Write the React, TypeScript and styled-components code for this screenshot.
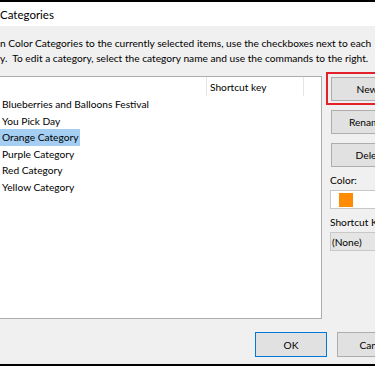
import styled, { createGlobalStyle } from 'styled-components';

const categories = [
    'Blueberries and Balloons Festival',
    'You Pick Day',
    'Orange Category',
    'Purple Category',
    'Red Category',
    'Yellow Category',
];

const GlobalStyle = createGlobalStyle`
    html, body {
        margin: 0;
        padding: 0;
        background: #f0f0f0;
    }
    #root {
        width: 375px;
        height: 366px;
        overflow: hidden;
    }
`;

const Frame = styled.div`
    width: 375px;
    height: 366px;
    box-sizing: border-box;
    border-top: 2px solid #000;
    border-bottom: 2px solid #000;
    display: flex;
    flex-direction: column;
    font-family: Lato, 'Noto Sans', sans-serif;
    font-size: 10.2px;
    color: #000;
    overflow: hidden;
`;

const TitleBar = styled.div`
    height: 24px;
    background: #fff;
    display: flex;
    align-items: center;
    font-size: 11.5px;
    white-space: nowrap;
`;

const Body = styled.div`
    flex: 1;
    background: #f0f0f0;
    display: flex;
    flex-direction: column;
`;

const Description = styled.div`
    padding-top: 10px;
    line-height: 15px;
    white-space: nowrap;
    height: 40px;
    box-sizing: border-box;
`;

const Main = styled.div`
    display: flex;
    gap: 8px;
    margin-top: 10px;
`;

const ListBox = styled.div`
    flex-shrink: 0;
    width: 322px;
    height: 243px;
    box-sizing: border-box;
    background: #fff;
    border: 1px solid #adadad;
    border-left: none;
    display: flex;
    flex-direction: column;
`;

const Header = styled.div`
    height: 19px;
    display: grid;
    grid-template-columns: 207px 97px 1fr;
`;

const HeaderCell = styled.div<{ $sep?: boolean }>`
    border-right: ${(p) => (p.$sep ? '1px solid #e5e5e5' : 'none')};
    padding-left: 3px;
    display: flex;
    align-items: center;
`;

const Rows = styled.div`
    display: flex;
    flex-direction: column;
`;

const Row = styled.div`
    height: 16.5px;
    display: flex;
    align-items: center;
`;

const Label = styled.span<{ $selected?: boolean }>`
    padding: 1px 2px;
    line-height: 14.5px;
    background: ${(p) => (p.$selected ? '#a4cff3' : 'transparent')};
`;

const Side = styled.div`
    flex-shrink: 0;
    width: 45px;
    display: flex;
    flex-direction: column;
    padding-top: 1px;
`;

const Button = styled.div<{ $focused?: boolean; $width?: number }>`
    position: relative;
    width: ${(p) => p.$width ?? 79}px;
    height: 24px;
    box-sizing: border-box;
    background: #e1e1e1;
    border: 1px solid ${(p) => (p.$focused ? '#0078d7' : '#adadad')};
    display: flex;
    align-items: center;
    justify-content: center;
    flex-shrink: 0;
    white-space: nowrap;
`;

const SideButton = styled(Button)`
    margin-left: 1px;
    margin-bottom: 9px;

    &:nth-of-type(3) {
        margin-bottom: 6px;
    }
`;

const Highlight = styled.div`
    position: absolute;
    left: -6px;
    top: -6px;
    width: 100px;
    height: 33px;
    box-sizing: border-box;
    border: 2px solid #e3212b;
`;

const FieldLabel = styled.div`
    height: 15px;
    line-height: 15px;
    margin-bottom: 2px;
    white-space: nowrap;
`;

const ColorBox = styled.div`
    width: 70px;
    height: 19px;
    flex-shrink: 0;
    box-sizing: border-box;
    background: #fff;
    border: 1px solid #c8c8c8;
    display: flex;
    align-items: center;
    padding-left: 8px;
    margin-bottom: 6px;
`;

const Swatch = styled.div<{ $color: string }>`
    width: 14px;
    height: 14px;
    background: ${(p) => p.$color};
`;

const Dropdown = styled.div`
    width: 70px;
    height: 19px;
    flex-shrink: 0;
    box-sizing: border-box;
    background: #e5e5e5;
    border: 1px solid #c8c8c8;
    display: flex;
    align-items: center;
    padding-left: 1px;
    white-space: nowrap;
`;

const Footer = styled.div`
    display: flex;
    gap: 10px;
    padding-left: 255px;
    margin-top: 13px;
`;

const FooterButton = styled(Button)`
    height: 25px;
`;

export default function App() {
    return (
        <>
            <GlobalStyle />
            <Frame>
                <TitleBar>Categories</TitleBar>
                <Body>
                    <Description>
                        <div>n Color Categories to the currently selected items, use the checkboxes next to each</div>
                        <div>y.&nbsp; To edit a category, select the category name and use the commands to the right.</div>
                    </Description>
                    <Main>
                        <ListBox>
                            <Header>
                                <HeaderCell $sep />
                                <HeaderCell $sep>Shortcut key</HeaderCell>
                                <HeaderCell />
                            </Header>
                            <Rows>
                                {categories.map((name) => (
                                    <Row key={name}>
                                        <Label $selected={name === 'Orange Category'}>{name}</Label>
                                    </Row>
                                ))}
                            </Rows>
                        </ListBox>
                        <Side>
                            <SideButton>
                                New...
                                <Highlight />
                            </SideButton>
                            <SideButton>Rename...</SideButton>
                            <SideButton>Delete</SideButton>
                            <FieldLabel>Color:</FieldLabel>
                            <ColorBox>
                                <Swatch $color="#ff8c00" />
                            </ColorBox>
                            <FieldLabel>Shortcut Key:</FieldLabel>
                            <Dropdown>(None)</Dropdown>
                        </Side>
                    </Main>
                    <Footer>
                        <FooterButton $focused $width={72}>
                            OK
                        </FooterButton>
                        <FooterButton $width={75}>Cancel</FooterButton>
                    </Footer>
                </Body>
            </Frame>
        </>
    );
}
